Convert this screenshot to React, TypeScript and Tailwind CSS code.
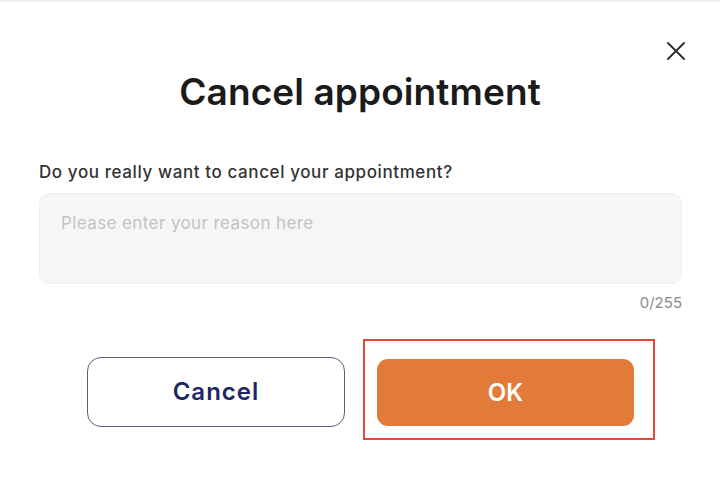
import { useState } from "react";

export default function App() {
  const [reason, setReason] = useState("");

  return (
    <div
      className="w-[720px] h-[480px] bg-white border-t-2 border-[#f1f1f1] flex flex-col overflow-hidden"
      style={{ fontFamily: "Inter, 'Noto Sans', sans-serif" }}
    >
      {/* Close */}
      <div className="flex justify-end pt-[40px] pr-[35px]">
        <button className="w-[18px] h-[18px] text-[#2b2b2b]" aria-label="Close">
          <svg viewBox="0 0 18 18" width="18" height="18" fill="none" stroke="currentColor" strokeWidth="1.8" strokeLinecap="round">
            <path d="M1 1L17 17M17 1L1 17" />
          </svg>
        </button>
      </div>

      <h1 className="mt-[12px] text-center text-[37px] leading-[40px] font-semibold tracking-[0.1px] text-[#1b1b1b]">
        Cancel appointment
      </h1>

      <div className="px-[39px] pr-[38px] mt-[50px]">
        <p className="text-[17px] leading-[20px] font-medium tracking-[0.6px] text-[#333333]">
          Do you really want to cancel your appointment?
        </p>
        <textarea
          value={reason}
          onChange={(e) => setReason(e.target.value.slice(0, 255))}
          placeholder="Please enter your reason here"
          className="mt-[11px] block w-full h-[91px] resize-none rounded-[10px] border border-[#f0f0f0] bg-[#f6f6f6] px-[21px] pt-[17px] text-[17px] leading-[24px] tracking-[0.4px] text-[#333] placeholder:text-[#c3c3c3] outline-none"
        />
        <div className="mt-[9px] text-right text-[15px] leading-[20px] text-[#8a8a8a]">
          {reason.length}/255
        </div>
      </div>

      <div className="flex items-start pl-[87px] mt-[26px] gap-[18px]">
        <button className="mt-[18px] w-[258px] h-[70px] rounded-[14px] border-[1.5px] border-[#5c6180] bg-white text-[24px] font-semibold tracking-[1px] text-[#1e2766]">
          Cancel
        </button>
        <div className="border-2 border-[#e04a3b] pl-[12px] pr-[19px] pt-[18px] pb-[12px]">
          <button className="w-[257px] h-[67px] rounded-[11px] bg-[#e27a39] text-[24px] font-semibold text-white">
            OK
          </button>
        </div>
      </div>
    </div>
  );
}
